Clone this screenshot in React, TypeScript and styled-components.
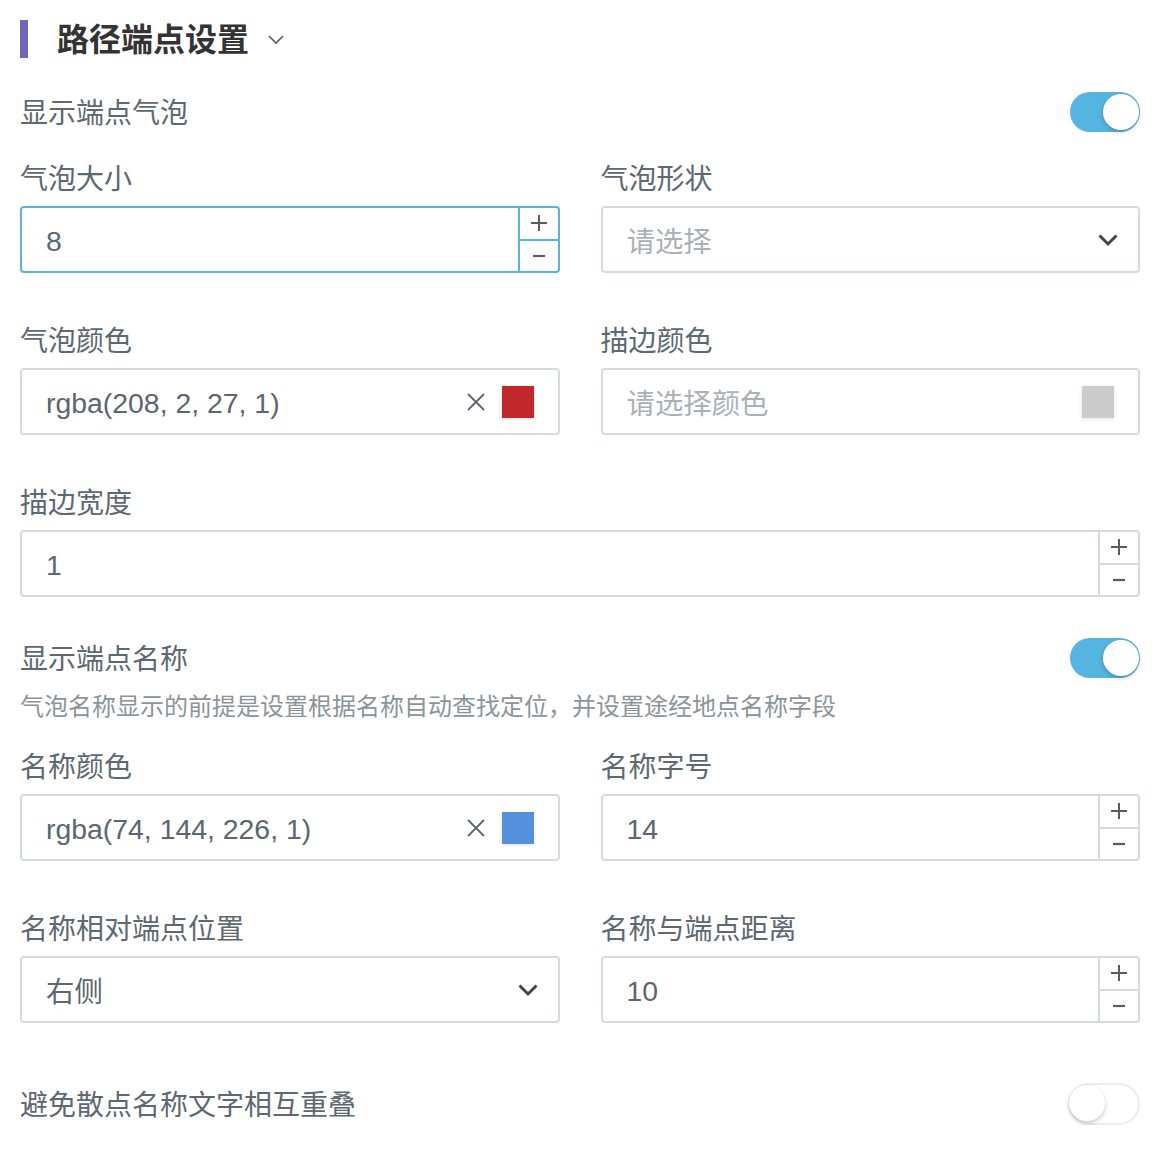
import React from "react";
import styled, { createGlobalStyle } from "styled-components";

const Global = createGlobalStyle`
  html, body { margin: 0; padding: 0; background: #fff; }
  body {
    font-family: "Helvetica Neue", "Liberation Sans", "Noto Sans CJK SC", sans-serif;
    -webkit-font-smoothing: antialiased;
  }
  * { box-sizing: border-box; }
`;

const Panel = styled.div`
  width: 1164px;
  padding: 20px 24px 20px 20px;
  display: flex;
  flex-direction: column;
`;

const Header = styled.div`
  display: flex;
  align-items: center;
  height: 38px;
`;

const Bar = styled.div`
  width: 8px;
  height: 38px;
  background: #7067b8;
`;

const Title = styled.h2`
  margin: 0 0 0 29px;
  padding-top: 2px;
  font-size: 32px;
  line-height: 38px;
  font-weight: 700;
  color: #333;
`;

const TitleChevron = styled.svg`
  margin-left: 18px;
  width: 18px;
  height: 12px;
`;

const SwitchRow = styled.div<{ $mt: number; $h: number }>`
  margin-top: ${(p) => p.$mt}px;
  height: ${(p) => p.$h}px;
  display: flex;
  align-items: center;
  justify-content: space-between;
`;

const Label = styled.div`
  padding-top: 4px;
  font-size: 28px;
  line-height: 32px;
  color: #5d6872;
  white-space: nowrap;
`;

const Hint = styled.div`
  margin-top: 10px;
  padding-top: 2px;
  font-size: 24px;
  line-height: 34px;
  color: #8b949b;
  white-space: nowrap;
`;

const Track = styled.div<{ $on: boolean }>`
  position: relative;
  width: ${(p) => (p.$on ? 70 : 72)}px;
  height: ${(p) => (p.$on ? 40 : 42)}px;
  border-radius: 21px;
  background: ${(p) => (p.$on ? "#56b4e0" : "#fff")};
  border: ${(p) => (p.$on ? "none" : "2px solid #ececec")};
`;

const Knob = styled.div<{ $on: boolean }>`
  position: absolute;
  top: ${(p) => (p.$on ? 2 : 0)}px;
  ${(p) => (p.$on ? "right: 1px;" : "left: -1px;")}
  width: 36px;
  height: 36px;
  border-radius: 50%;
  background: #fff;
  box-shadow: 0 2px 4px rgba(0, 0, 0, 0.22);
`;

const Grid = styled.div<{ $mt: number }>`
  margin-top: ${(p) => p.$mt}px;
  display: grid;
  grid-template-columns: 1fr 1fr;
  column-gap: 41px;
  row-gap: 49px;
`;

const Field = styled.div<{ $span?: boolean }>`
  display: flex;
  flex-direction: column;
  gap: 10px;
  ${(p) => (p.$span ? "grid-column: 1 / -1;" : "")}
`;

const Box = styled.div<{ $focus?: boolean }>`
  height: 67px;
  display: flex;
  align-items: stretch;
  border: 2px solid ${(p) => (p.$focus ? "#56b4e0" : "#d3dde1")};
  border-radius: 4px;
  background: #fff;
`;

const Value = styled.div<{ $placeholder?: boolean; $cjk?: boolean }>`
  flex: 1;
  display: flex;
  align-items: center;
  padding: ${(p) => (p.$cjk ? "0" : "3px")} 0 0 24px;
  font-size: 28.4px;
  color: ${(p) => (p.$placeholder ? "#a9b1b7" : "#5b6670")};
  white-space: nowrap;
`;

const Spinner = styled.div<{ $focus?: boolean }>`
  width: 40px;
  display: flex;
  flex-direction: column;
  border-left: 2px solid ${(p) => (p.$focus ? "#56b4e0" : "#d3dde1")};
`;

const SpinBtn = styled.div<{ $focus?: boolean; $top?: boolean }>`
  flex: 1;
  display: flex;
  align-items: center;
  justify-content: center;
  ${(p) =>
    p.$top ? `border-bottom: 2px solid ${p.$focus ? "#56b4e0" : "#d3dde1"};` : ""}
`;

const Right = styled.div<{ $pr: number }>`
  display: flex;
  align-items: center;
  gap: 16px;
  padding-right: ${(p) => p.$pr}px;
`;

const Swatch = styled.div<{ $color: string }>`
  width: 32px;
  height: 32px;
  background: ${(p) => p.$color};
  box-shadow: 0 1px 4px rgba(0, 0, 0, 0.12);
`;

const Arrow = styled.svg`
  width: 20px;
  height: 14px;
`;

const ClearX = styled.svg`
  width: 20px;
  height: 20px;
`;

function Toggle({ on }: { on: boolean }) {
  return (
    <Track $on={on}>
      <Knob $on={on} />
    </Track>
  );
}

function NumberBox({ value, focus }: { value: string; focus?: boolean }) {
  return (
    <Box $focus={focus}>
      <Value>{value}</Value>
      <Spinner $focus={focus}>
        <SpinBtn $focus={focus} $top>
          <svg width="18" height="18" viewBox="0 0 18 18">
            <path d="M9 1v16M1 9h16" stroke="#555e66" strokeWidth="2" />
          </svg>
        </SpinBtn>
        <SpinBtn>
          <svg width="14" height="4" viewBox="0 0 14 4">
            <path d="M1 2h12" stroke="#555e66" strokeWidth="2.2" />
          </svg>
        </SpinBtn>
      </Spinner>
    </Box>
  );
}

function SelectBox({ value, placeholder }: { value?: string; placeholder?: string }) {
  return (
    <Box>
      <Value $placeholder={!value} $cjk>
        {value || placeholder}
      </Value>
      <Right $pr={20}>
        <Arrow viewBox="0 0 20 14">
          <path d="M1.5 2.5l8.5 8.5 8.5-8.5" fill="none" stroke="#3d4751" strokeWidth="3" />
        </Arrow>
      </Right>
    </Box>
  );
}

function ColorBox({ value, color }: { value?: string; color: string }) {
  return (
    <Box>
      <Value $placeholder={!value} $cjk={!value}>
        {value || "请选择颜色"}
      </Value>
      <Right $pr={24}>
        {value && (
          <ClearX viewBox="0 0 20 20">
            <path d="M2 2l16 16M18 2L2 18" stroke="#5b6670" strokeWidth="1.8" />
          </ClearX>
        )}
        <Swatch $color={color} />
      </Right>
    </Box>
  );
}

export default function App() {
  return (
    <>
      <Global />
      <Panel>
        <Header>
          <Bar />
          <Title>路径端点设置</Title>
          <TitleChevron viewBox="0 0 18 12">
            <path d="M2 3l7 7 7-7" fill="none" stroke="#5a5a5a" strokeWidth="1.6" />
          </TitleChevron>
        </Header>

        <SwitchRow $mt={34} $h={40}>
          <Label>显示端点气泡</Label>
          <Toggle on />
        </SwitchRow>

        <Grid $mt={28}>
          <Field>
            <Label>气泡大小</Label>
            <NumberBox value="8" focus />
          </Field>
          <Field>
            <Label>气泡形状</Label>
            <SelectBox placeholder="请选择" />
          </Field>
          <Field>
            <Label>气泡颜色</Label>
            <ColorBox value="rgba(208, 2, 27, 1)" color="#c1272b" />
          </Field>
          <Field>
            <Label>描边颜色</Label>
            <ColorBox color="#cccccc" />
          </Field>
          <Field $span>
            <Label>描边宽度</Label>
            <NumberBox value="1" />
          </Field>
        </Grid>

        <SwitchRow $mt={41} $h={40}>
          <Label>显示端点名称</Label>
          <Toggle on />
        </SwitchRow>
        <Hint>气泡名称显示的前提是设置根据名称自动查找定位，并设置途经地点名称字段</Hint>

        <Grid $mt={24}>
          <Field>
            <Label>名称颜色</Label>
            <ColorBox value="rgba(74, 144, 226, 1)" color="#5590dc" />
          </Field>
          <Field>
            <Label>名称字号</Label>
            <NumberBox value="14" />
          </Field>
          <Field>
            <Label>名称相对端点位置</Label>
            <SelectBox value="右侧" />
          </Field>
          <Field>
            <Label>名称与端点距离</Label>
            <NumberBox value="10" />
          </Field>
        </Grid>

        <SwitchRow $mt={60} $h={42}>
          <Label>避免散点名称文字相互重叠</Label>
          <Toggle on={false} />
        </SwitchRow>
      </Panel>
    </>
  );
}
